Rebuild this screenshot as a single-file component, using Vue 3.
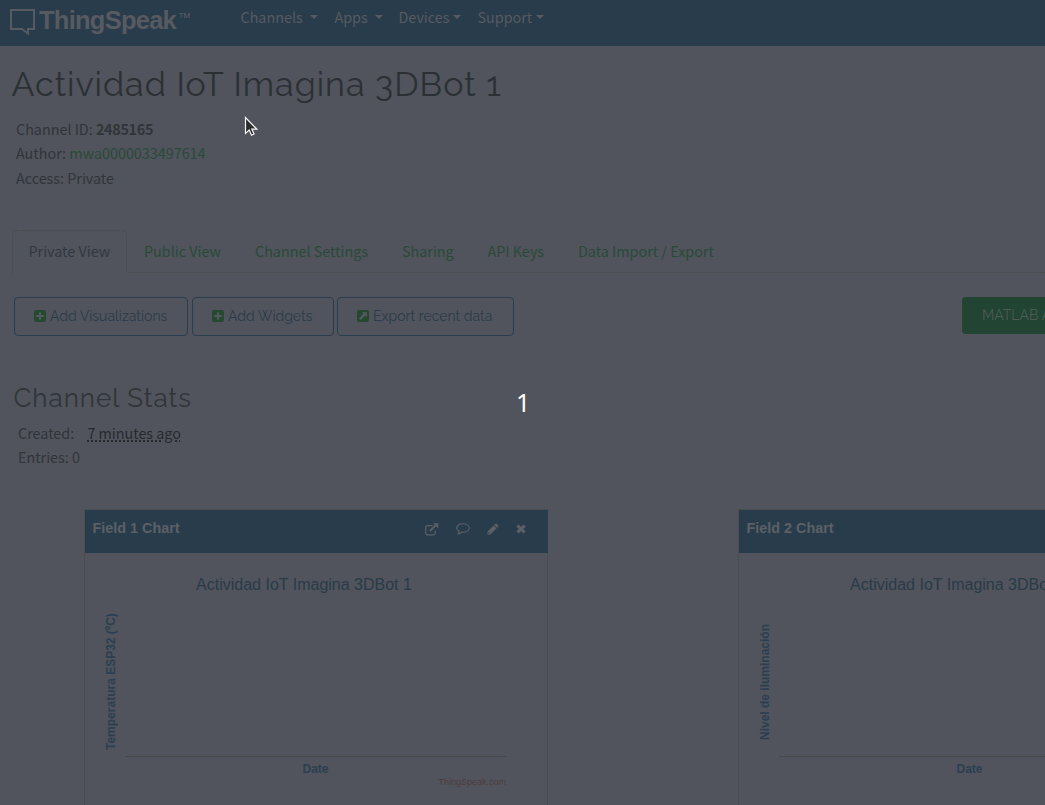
<script setup>
const nav = [
  { label: 'Channels', cls: 'n1' },
  { label: 'Apps', cls: 'n2' },
  { label: 'Devices', cls: 'n3' },
  { label: 'Support', cls: 'n4' },
]
const tabs = ['Public View', 'Channel Settings', 'Sharing', 'API Keys', 'Data Import / Export']
const buttons = [
  { label: 'Add Visualizations', icon: 'plus', cls: 'b1' },
  { label: 'Add Widgets', icon: 'plus', cls: 'b2' },
  { label: 'Export recent data', icon: 'arrow', cls: 'b3' },
]
const charts = [
  { title: 'Field 1 Chart', axis: 'Temperatura ESP32 (ºC)' },
  { title: 'Field 2 Chart', axis: 'Nivel de iluminación' },
]
</script>

<template>
  <div class="page">
    <header class="navbar">
      <div class="brand">
        <svg class="logo" width="26" height="26" viewBox="0 0 26 26"><path d="M1 1H24V20H18V24.5L12 20H1Z" /></svg>
        <span class="name">ThingSpeak</span><span class="tm">™</span>
      </div>
      <nav class="menu">
        <span v-for="n in nav" :key="n.label" class="menu-item" :class="n.cls">
          <span>{{ n.label }}</span><i class="caret"></i>
        </span>
      </nav>
    </header>

    <h1>Actividad IoT Imagina 3DBot 1</h1>
    <div class="meta">
      <div>Channel ID: <b>2485165</b></div>
      <div>Author: <a>mwa0000033497614</a></div>
      <div>Access: Private</div>
    </div>

    <div class="tabs">
      <div class="tab active">Private View</div>
      <div v-for="(t, i) in tabs" :key="t" class="tab" :class="'t' + i">{{ t }}</div>
    </div>

    <div class="actions">
      <div v-for="b in buttons" :key="b.label" class="btn" :class="b.cls">
        <svg width="12" height="12" viewBox="0 0 12 12">
          <rect width="12" height="12" rx="2" fill="#24492f" />
          <path v-if="b.icon === 'plus'" d="M6 2.2V9.8M2.2 6H9.8" stroke="#555a61" stroke-width="1.9" />
          <path v-else d="M4.8 2.2H9.8V7.2L8.2 5.6L3.6 10.1L1.9 8.4L6.4 3.8Z" fill="#555a61" />
        </svg>
        <span>{{ b.label }}</span>
      </div>
      <div class="matlab"><span>MATLAB Analysis</span></div>
    </div>

    <h2>Channel Stats</h2>
    <div class="stats">
      <div>Created: <span class="ago">7 minutes ago</span></div>
      <div>Entries: 0</div>
    </div>

    <div class="charts">
      <section v-for="c in charts" :key="c.title" class="card">
        <div class="card-head">
          <strong>{{ c.title }}</strong>
          <div class="tools">
            <svg width="14" height="13" viewBox="0 0 14 13" fill="none" stroke="#5c6066" stroke-width="1.2">
              <path d="M7.5 2.6H2.4Q.8 2.6 .8 4.2V10.2Q.8 11.8 2.4 11.8H8.6Q10.2 11.8 10.2 10.2V7.4" />
              <path d="M4.9 8L10.8 2.1" stroke-width="1.9" /><path d="M8.2 .2H13.4V5.4Z" fill="#5c6066" stroke="none" />
            </svg>
            <svg width="14" height="12" viewBox="0 0 14 12" fill="none" stroke="#5c6066" stroke-width="1.1">
              <path d="M7 .8C10.5 .8 13.3 2.6 13.3 5S10.5 9.2 7 9.2L5.5 9.1Q4.2 10.7 2 11Q3 9.9 3.1 8.3C1.6 7.5 .7 6.3 .7 5C.7 2.6 3.5 .8 7 .8Z" />
            </svg>
            <svg width="12" height="12" viewBox="0 0 12 12" fill="#5c6066">
              <path d="M8.2 .9Q9 .1 9.8 .9L11.1 2.2Q11.9 3 11.1 3.8L10.1 4.8L7.2 1.9ZM6.7 2.4L9.6 5.3L3.4 11.5H.5V8.6ZM1.5 9.2V10.3H2.8L3.1 10L1.8 8.8Z" fill-rule="evenodd" />
            </svg>
            <svg width="10" height="10" viewBox="0 0 10 10"><path d="M1.4 1.6L8.6 8.4M8.6 1.6L1.4 8.4" stroke="#5c6066" stroke-width="3" /></svg>
          </div>
        </div>
        <div class="card-body">
          <div class="chart-title">Actividad IoT Imagina 3DBot 1</div>
          <div class="plot">
            <div class="axis"><span>{{ c.axis }}</span></div>
            <div class="area"></div>
          </div>
          <div class="date">Date</div>
          <div class="credit">ThingSpeak.com</div>
        </div>
      </section>
    </div>

    <div class="count">1</div>
    <svg class="cursor" width="14" height="21" viewBox="0 0 14 21">
      <path d="M1.5 1.5V17.5L5.2 14.1L7.5 19.2L10 18L7.8 13.1H12.8Z" fill="#2b2c2e" stroke="#f5f5f5" stroke-width="1.2" />
    </svg>
  </div>
</template>

<style>
body { background: #51545c; overflow: hidden; }
</style>
<style scoped>
.page {
  position: relative; width: 1045px; height: 805px; overflow: hidden; box-sizing: border-box;
  background: #51545c; color: #303539;
  font: 14.35px/24px "Noto Sans CJK SC", sans-serif; white-space: nowrap;
}
.navbar { height: 46px; background: #293c4c; color: #575a60; display: flex; align-items: flex-start; }
.brand { display: flex; width: 240.5px; box-sizing: border-box; padding-left: 10px; font-family: "Liberation Sans", sans-serif; flex: none; }
.logo { margin: 9px 3px 0 0; flex: none; }
.logo path { fill: none; stroke: #575a60; stroke-width: 2; }
.name { font-size: 25.5px; font-weight: bold; line-height: 40px; letter-spacing: -0.75px; }
.tm { font-size: 13px; line-height: 36px; margin-left: 2px; }
.menu { display: flex; padding-top: 5px; }
.menu-item { display: flex; align-items: center; box-sizing: border-box; }
.n1 { width: 94px; } .n2 { width: 64px; } .n3 { width: 79px; }
.n1 .caret, .n2 .caret { margin-left: 7px; }
.caret { border: 4px solid transparent; border-top-color: #575a60; border-bottom: 0; margin-left: 4px; }
h1 { margin: 14px 0 0 11.5px; height: 49px; font: 400 34px/48px Raleway, Lato, sans-serif; letter-spacing: 1px; color: #2b3034; }
.meta { margin: 8px 0 0 16px; line-height: 24.5px; height: 74px; }
.meta b { letter-spacing: -0.3px; }
.meta div:nth-child(2) { margin-top: -0.5px; margin-bottom: 0.5px; }
a { color: #294a39; }
.tabs { display: flex; height: 43px; margin: 39px 0 0 12px; box-sizing: border-box; border-bottom: 1px dotted #474a4b; }
.tab { line-height: 41px; color: #294a39; flex: none; }
.active { width: 115px; height: 43px; box-sizing: border-box; border: 1px dotted #474a4b; border-bottom-color: #51545c; border-radius: 5px 5px 0 0; padding-left: 15.5px; color: #30383f; margin-right: 17px; line-height: 39px; }
.t0 { width: 111px; } .t1 { width: 147px; } .t2 { width: 85.5px; } .t3 { width: 90.5px; }
.actions { display: flex; height: 39px; margin: 24px 0 0 14px; gap: 3px; font: 400 14px/36px Raleway, Lato, sans-serif; }
.btn { display: flex; box-sizing: border-box; border: 1px solid #293d4f; border-radius: 4px; padding-left: 19.5px; color: #2c3b4b; flex: none; }
.btn svg { margin: 12px 4px 0 -0.5px; flex: none; }
.b1 { width: 174px; } .b2 { width: 142px; margin-left: 1px; } .b3 { width: 177px; }
.matlab { margin-left: 445px; width: 150px; height: 37px; border-radius: 4px; background: #214433; color: #4d5a55; padding-left: 20px; flex: none; }
h2 { margin: 43px 0 0 13.5px; height: 38px; font: 400 26px/38px Raleway, Lato, sans-serif; letter-spacing: 1px; color: #303539; }
.stats { margin: 4px 0 0 18px; height: 48px; }
.ago { margin-left: 10px; color: #262a2f; text-decoration: underline dotted; text-underline-offset: 1px; text-decoration-thickness: 1.5px; }
.charts { display: flex; gap: 190px; margin: 40px 0 0 84px; }
.card { width: 464px; height: 297px; box-sizing: border-box; border: 1px solid #4b4e51; border-bottom: 0; font-family: "Liberation Sans", sans-serif; flex: none; }
.card-head { height: 43px; background: #293c4c; display: flex; justify-content: space-between; color: #5c6066; padding: 0 22px 0 7.5px; margin-right: -1px; }
.card-head strong { font-size: 14.4px; line-height: 36px; }
.tools { display: flex; align-items: center; height: 38px; gap: 17px; }
.card-body { padding: 20px 0 0 20px; }
.chart-title { width: 398px; text-align: center; font-size: 16px; line-height: 24px; color: #293b49; }
.plot { display: flex; height: 160px; }
.axis { width: 20px; display: flex; align-items: flex-start; justify-content: center; padding-top: 10px; height: 150px; box-sizing: border-box; margin-left: -4px; }
.axis span { writing-mode: vertical-rl; transform: rotate(180deg); height: 149px; flex: none; text-align: center; font-size: 12px; line-height: 14px; font-weight: bold; color: #2b3f51; }
.area { width: 381px; margin-left: 4px; border-bottom: 1px solid #45494c; height: 160px; box-sizing: border-box; }
.date { width: 381px; margin-left: 20px; text-align: center; font-size: 12px; line-height: 24px; font-weight: bold; color: #2b3f51; }
.credit { width: 401px; text-align: right; font-size: 9px; line-height: 12px; margin-top: -5px; color: #4e3b3f; }
.count { position: absolute; left: 516px; top: 384px; color: #fff; font: 25px/36px "Noto Sans", sans-serif; }
.cursor { position: absolute; left: 244px; top: 116px; }
</style>
